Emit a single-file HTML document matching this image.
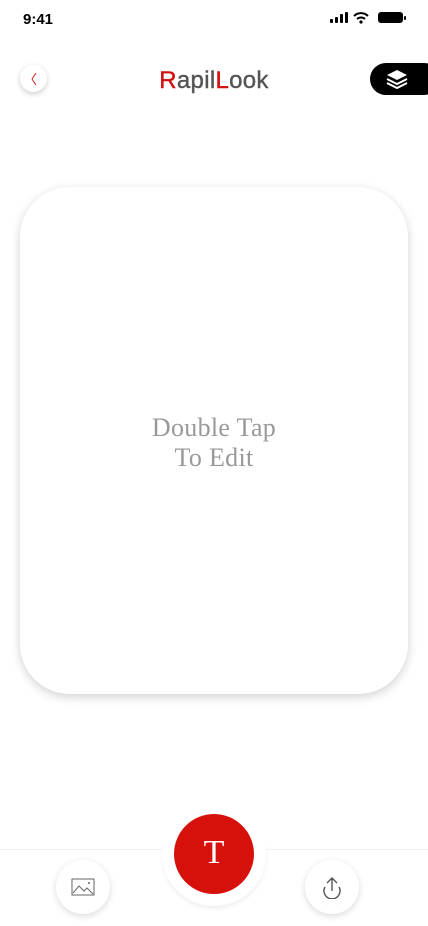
<!DOCTYPE html>
<html><head><style>
*{margin:0;padding:0;box-sizing:border-box}
body{width:428px;height:926px;background:#fff;position:relative;overflow:hidden;font-family:"Liberation Sans",sans-serif}
.abs{position:absolute}
</style></head><body>
<div class="abs" style="left:23px;top:11px;font-size:15px;font-weight:bold;color:#000">9:41</div>
<svg class="abs" style="left:330px;top:11px" width="80" height="14" viewBox="0 0 80 14">
<rect x="0" y="8" width="3" height="4" rx="1"/><rect x="5" y="6" width="3" height="6" rx="1"/><rect x="10" y="3" width="3" height="9" rx="1"/><rect x="15" y="1" width="3" height="11" rx="1"/>
<path d="M24 5 a10 10 0 0 1 14 0 M27 8 a6 6 0 0 1 8 0" stroke="#000" stroke-width="2" fill="none"/><circle cx="31" cy="11" r="1.6"/>
<rect x="48" y="1" width="25" height="11" rx="3"/><rect x="74" y="5" width="2" height="4" rx="1"/>
</svg>
<div class="abs" style="left:20px;top:65px;width:27px;height:27px;border-radius:50%;background:#fff;box-shadow:0 2px 6px rgba(0,0,0,.2)"></div>
<svg class="abs" style="left:28px;top:70px" width="12" height="18" viewBox="0 0 12 18"><path d="M8 3 L4 9 L8 15" stroke="#d41010" stroke-width="0.9" fill="none"/></svg>
<div class="abs" style="left:0;width:428px;top:67px;text-align:center;font-size:24px;color:#555;letter-spacing:0.3px;-webkit-text-stroke:0.4px #555"><span style="color:#d41010;-webkit-text-stroke:0.4px #d41010">R</span>apil<span style="color:#d41010;-webkit-text-stroke:0.4px #d41010">L</span>ook</div>
<div class="abs" style="left:370px;top:63px;width:70px;height:32px;border-radius:16px;background:#000"></div>
<svg class="abs" style="left:385px;top:68px" width="24" height="22" viewBox="0 0 24 22">
<path d="M12 2 L22 7 L12 12 L2 7Z" fill="#fff"/><path d="M2 11 L12 16 L22 11" stroke="#fff" stroke-width="2" fill="none"/><path d="M2 15 L12 20 L22 15" stroke="#fff" stroke-width="2" fill="none"/></svg>
<div class="abs" style="left:20px;top:187px;width:388px;height:507px;border-radius:50px;background:#fff;box-shadow:0 3px 10px rgba(0,0,0,.18)"></div>
<div class="abs" style="left:0;width:428px;top:413px;text-align:center;font-family:'Liberation Serif',serif;font-size:26px;line-height:30px;color:#999;letter-spacing:0.3px">Double Tap<br>To Edit</div>
<div class="abs" style="left:0;top:849px;width:428px;height:1px;background:#f0f0f0"></div>
<div class="abs" style="left:162px;top:802px;width:104px;height:104px;border-radius:50%;background:#fff;box-shadow:0 3px 4px rgba(0,0,0,.06)"></div>
<div class="abs" style="left:162px;top:802px;width:104px;height:48px;background:#fff"></div>
<div class="abs" style="left:174px;top:814px;width:80px;height:80px;border-radius:50%;background:#d6110c"></div>
<div class="abs" style="left:174px;top:835px;width:80px;text-align:center;font-family:'Liberation Serif',serif;font-size:34px;line-height:36px;color:#fff">T</div>
<div class="abs" style="left:56px;top:860px;width:54px;height:54px;border-radius:50%;background:#fff;box-shadow:0 2px 7px rgba(0,0,0,.15)"></div>
<svg class="abs" style="left:71px;top:877px" width="24" height="20" viewBox="0 0 24 20"><rect x="1" y="2" width="22" height="16" fill="none" stroke="#666"/><path d="M2 16 L8 9 L13 14 L16 11 L22 17" fill="none" stroke="#666"/><circle cx="18" cy="6" r="1" fill="#666"/></svg>
<div class="abs" style="left:305px;top:860px;width:54px;height:54px;border-radius:50%;background:#fff;box-shadow:0 2px 7px rgba(0,0,0,.15)"></div>
<svg class="abs" style="left:320px;top:875px" width="24" height="24" viewBox="0 0 24 24"><path d="M12 16 V3 M7 8 L12 3 L17 8" fill="none" stroke="#555" stroke-width="1.4"/><path d="M5 12 A8 8 0 1 0 19 12" fill="none" stroke="#555" stroke-width="1.4"/></svg>
</body></html>
